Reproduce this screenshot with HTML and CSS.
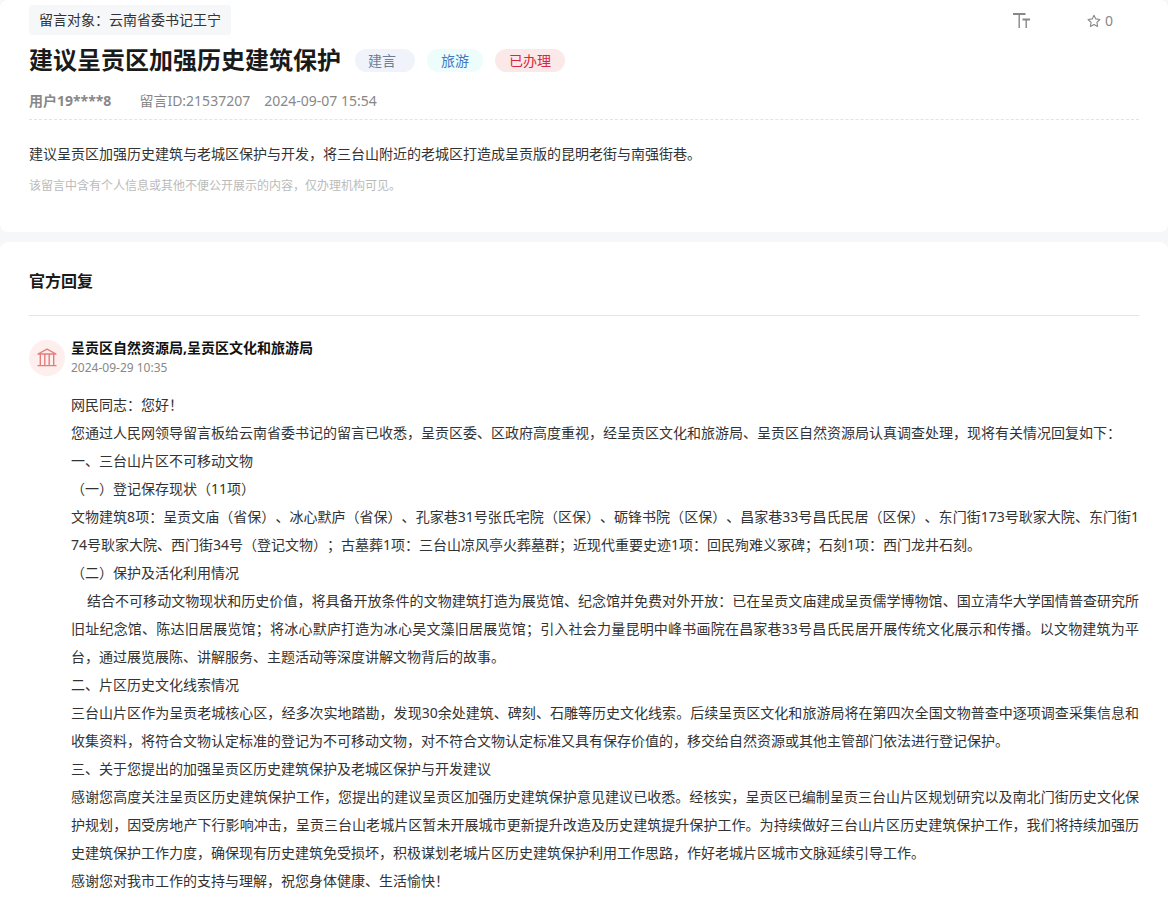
FILE: index.html
```html
<!DOCTYPE html>
<html lang="zh-CN">
<head>
<meta charset="utf-8">
<meta name="viewport" content="width=device-width, initial-scale=1">
<title>建议呈贡区加强历史建筑保护</title>
<link rel="stylesheet" href="styles.css">
</head>
<body>
<main class="page">
  <article class="card message">
    <div class="topbar">
      <p class="target">留言对象：云南省委书记王宁</p>
      <div class="tools">
        <button class="tool" type="button" aria-label="字号">
          <svg width="18" height="18" viewBox="0 0 18 18" fill="none" stroke="currentColor"><path stroke-width="1.8" d="M0 2H12.5M9.5 7.5H17"/><path stroke-width="1.4" d="M6.2 2V16M13.2 7V16"/></svg>
        </button>
        <button class="tool" type="button" aria-label="收藏">
          <svg width="14" height="14" viewBox="0 0 14 14" fill="none" stroke="currentColor" stroke-width="1.1" stroke-linejoin="round"><path d="M7 1.2L8.8 4.9L12.9 5.5L9.9 8.4L10.6 12.5L7 10.6L3.4 12.5L4.1 8.4L1.1 5.5L5.2 4.9Z"/></svg>
          <span>0</span>
        </button>
      </div>
    </div>
    <div class="headline">
      <h1 class="title">建议呈贡区加强历史建筑保护</h1>
      <div class="tags">
        <span class="tag tag-type">建言</span>
        <span class="tag tag-field">旅游</span>
        <span class="tag tag-state">已办理</span>
      </div>
    </div>
    <div class="meta">
      <strong class="user">用户19****8</strong>
      <span class="message-id">留言ID:21537207</span>
      <time>2024-09-07 15:54</time>
    </div>
    <p class="message-text">建议呈贡区加强历史建筑与老城区保护与开发，将三台山附近的老城区打造成呈贡版的昆明老街与南强街巷。</p>
    <p class="notice">该留言中含有个人信息或其他不便公开展示的内容，仅办理机构可见。</p>
  </article>

  <section class="card reply">
    <h2 class="section-title">官方回复</h2>
    <div class="reply-row">
      <div class="avatar">
        <svg width="20" height="20" viewBox="0 0 20 20" fill="none" stroke="currentColor" stroke-width="1.4" stroke-linejoin="round"><path d="M1 6L10 1.2L19 6ZM0.5 17.6H19.5M3.3 6V17.5M7.8 6V17.5M12.2 6V17.5M16.7 6V17.5"/></svg>
      </div>
      <div class="reply-main">
        <h3 class="agency">呈贡区自然资源局,呈贡区文化和旅游局</h3>
        <time class="reply-time">2024-09-29 10:35</time>
        <div class="reply-text">
          <p>网民同志：您好！</p>
          <p>您通过人民网领导留言板给云南省委书记的留言已收悉，呈贡区委、区政府高度重视，经呈贡区文化和旅游局、呈贡区自然资源局认真调查处理，现将有关情况回复如下：</p>
          <p>一、三台山片区不可移动文物</p>
          <p>（一）登记保存现状（11项）</p>
          <p>文物建筑8项：呈贡文庙（省保）、冰心默庐（省保）、孔家巷31号张氏宅院（区保）、砺锋书院（区保）、昌家巷33号昌氏民居（区保）、东门街173号耿家大院、东门街174号耿家大院、西门街34号（登记文物）；古墓葬1项：三台山凉风亭火葬墓群；近现代重要史迹1项：回民殉难义冢碑；石刻1项：西门龙井石刻。</p>
          <p>（二）保护及活化利用情况</p>
          <p class="indented">结合不可移动文物现状和历史价值，将具备开放条件的文物建筑打造为展览馆、纪念馆并免费对外开放：已在呈贡文庙建成呈贡儒学博物馆、国立清华大学国情普查研究所旧址纪念馆、陈达旧居展览馆；将冰心默庐打造为冰心吴文藻旧居展览馆；引入社会力量昆明中峰书画院在昌家巷33号昌氏民居开展传统文化展示和传播。以文物建筑为平台，通过展览展陈、讲解服务、主题活动等深度讲解文物背后的故事。</p>
          <p>二、片区历史文化线索情况</p>
          <p>三台山片区作为呈贡老城核心区，经多次实地踏勘，发现30余处建筑、碑刻、石雕等历史文化线索。后续呈贡区文化和旅游局将在第四次全国文物普查中逐项调查采集信息和收集资料，将符合文物认定标准的登记为不可移动文物，对不符合文物认定标准又具有保存价值的，移交给自然资源或其他主管部门依法进行登记保护。</p>
          <p>三、关于您提出的加强呈贡区历史建筑保护及老城区保护与开发建议</p>
          <p>感谢您高度关注呈贡区历史建筑保护工作，您提出的建议呈贡区加强历史建筑保护意见建议已收悉。经核实，呈贡区已编制呈贡三台山片区规划研究以及南北门街历史文化保护规划，因受房地产下行影响冲击，呈贡三台山老城片区暂未开展城市更新提升改造及历史建筑提升保护工作。为持续做好三台山片区历史建筑保护工作，我们将持续加强历史建筑保护工作力度，确保现有历史建筑免受损坏，积极谋划老城片区历史建筑保护利用工作思路，作好老城片区城市文脉延续引导工作。</p>
          <p>感谢您对我市工作的支持与理解，祝您身体健康、生活愉快！</p>
        </div>
      </div>
    </div>
  </section>
</main>
</body>
</html>
```
FILE: styles.css
```css
* {
  box-sizing: border-box;
}

body,
h1,
h2,
h3,
p {
  margin: 0;
}

body {
  background: #f6f7f9;
  color: #333;
  font-family: "Noto Sans", "Noto Sans CJK SC", sans-serif;
  font-size: 14px;
  line-height: 28px;
  text-spacing-trim: space-all;
}

.page {
  display: flex;
  flex-direction: column;
  gap: 10px;
}

.card {
  background: #fff;
  border-radius: 8px;
  padding: 0 29px;
}

.message {
  padding-top: 5px;
  padding-bottom: 32px;
}

.reply {
  border-radius: 8px 8px 0 0;
}

.topbar {
  display: flex;
  justify-content: space-between;
  align-items: center;
}

.target {
  padding: 0 10px;
  background: #f6f7f9;
  border-radius: 3px;
  line-height: 30px;
}

.tools {
  display: flex;
  gap: 56px;
  padding: 2px 26px 0 0;
}

.tool {
  display: flex;
  align-items: center;
  gap: 4px;
  padding: 0;
  border: 0;
  background: none;
  color: #888;
  font: inherit;
  cursor: pointer;
}

.headline {
  display: flex;
  align-items: center;
  gap: 14px;
  padding: 5px 0;
}

.title {
  color: #1a1a1a;
  font-size: 24px;
  line-height: 40px;
}

.tags {
  display: flex;
  gap: 12px;
}

.tag {
  padding: 0 14px;
  border-radius: 12px;
  line-height: 23px;
}

.tag-type {
  padding: 0 19px 0 13px;
  background: #f0f4fa;
  color: #6b7f99;
}

.tag-field {
  background: #ecfdfb;
  color: #3f78c4;
}

.tag-state {
  background: #fbe9ea;
  color: #d9263e;
}

.meta {
  display: flex;
  gap: 14px;
  padding: 2px 0 4px;
  border-bottom: 1px dashed #e3e3e3;
  color: #888;
}

.user {
  margin-right: 14px;
}

.message-text {
  padding-top: 20px;
}

.notice {
  padding-top: 4px;
  color: #bbb;
  font-size: 12px;
}

.section-title {
  padding: 25px 0 20px;
  border-bottom: 1px solid #e5e5e5;
  color: #1a1a1a;
  font-size: 16px;
}

.reply-row {
  display: flex;
  gap: 6px;
  padding: 24px 0 8px;
}

.avatar {
  display: flex;
  flex: none;
  align-items: center;
  justify-content: center;
  width: 36px;
  height: 36px;
  border-radius: 50%;
  background: #feeeee;
  color: #e27f7c;
}

.reply-main {
  flex: 1;
  min-width: 0;
}

.agency {
  color: #111;
  font-size: 14px;
  line-height: 16px;
}

.reply-time {
  display: block;
  color: #888;
  font-size: 12px;
  line-height: 24px;
}

.reply-text {
  padding-top: 11px;
  text-align: justify;
  word-break: break-all;
}

.indented {
  text-indent: 16px;
}
```
